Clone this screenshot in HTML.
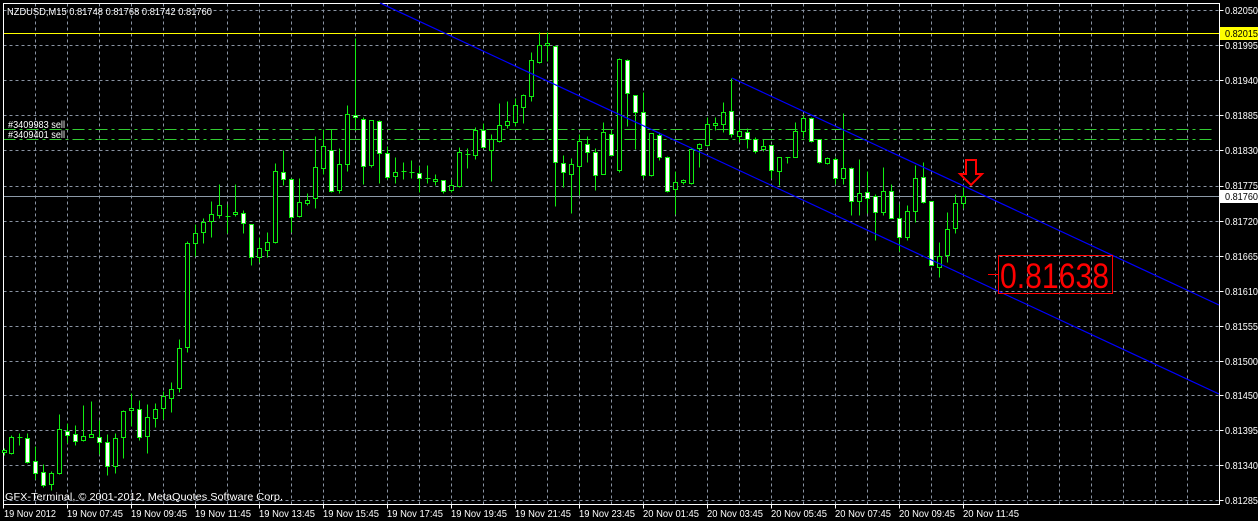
<!DOCTYPE html>
<html><head><meta charset="utf-8"><style>
html,body{margin:0;padding:0;background:#000;}
svg{display:block;}
text{font-family:"Liberation Sans",sans-serif;}
</style></head><body>
<svg width="1258" height="521" viewBox="0 0 1258 521" xmlns="http://www.w3.org/2000/svg">
<rect width="1258" height="521" fill="#000"/>
<g transform="translate(0.5,0.5)" shape-rendering="crispEdges">
<path fill="none" stroke="#8a94a3" stroke-width="1" stroke-dasharray="3,3" d="M35 3V504M67 3V504M99 3V504M131 3V504M163 3V504M195 3V504M227 3V504M259 3V504M291 3V504M323 3V504M355 3V504M387 3V504M419 3V504M451 3V504M483 3V504M515 3V504M547 3V504M579 3V504M611 3V504M643 3V504M675 3V504M707 3V504M739 3V504M771 3V504M803 3V504M835 3V504M867 3V504M899 3V504M931 3V504M963 3V504M995 3V504M1027 3V504M1059 3V504M1091 3V504M1123 3V504M1155 3V504M1187 3V504
M3 10H1219M3 45H1219M3 80H1219M3 115H1219M3 150H1219M3 186H1219M3 221H1219M3 256H1219M3 291H1219M3 326H1219M3 361H1219M3 395H1219M3 430H1219M3 465H1219M3 500H1219"/>
<path fill="none" stroke="#3c3" stroke-dasharray="12,4,3,4" d="M3 129H1215M3 139H1215"/>
<path stroke="#ff0" d="M3 33H1219"/>
<path stroke="#8c9aa8" d="M3 196H1219"/>
<path fill="none" stroke="#fff" d="M3 3H1219V504H3Z"/>
<path stroke="#fff" d="M1219 10H1223M1219 45H1223M1219 80H1223M1219 115H1223M1219 150H1223M1219 186H1223M1219 221H1223M1219 256H1223M1219 291H1223M1219 326H1223M1219 361H1223M1219 395H1223M1219 430H1223M1219 465H1223M1219 500H1223M3 504V508M67 504V508M131 504V508M195 504V508M259 504V508M323 504V508M387 504V508M451 504V508M515 504V508M579 504V508M643 504V508M707 504V508M771 504V508M835 504V508M899 504V508M963 504V508"/>
<path fill="none" stroke="#1e1" d="M4 448V455M11 435V454M19 433V445M27 433V463M35 446V479M43 464V487M51 471V490M59 414V474M67 423V443M75 425V445M83 405V441M91 401V437M99 420V454M107 434V475M115 433V473M123 410V458M131 393V426M139 400V440M147 404V453M155 403V427M163 391V419M171 382V412M179 339V392M187 241V352M195 224V256M203 218V243M211 201V237M219 184V218M227 204V233M235 184V216M243 210V233M251 224V265M259 237V262M267 232V257M275 163V243M283 150V185M291 178V232M299 178V217M307 193V205M315 136V208M323 129V174M331 129V192M339 148V193M347 105V171M355 38V130M363 117V184M371 120V167M379 120V183M387 146V179M395 157V183M403 162V179M411 160V178M419 166V192M427 165V183M435 174V185M443 180V193M451 179V192M459 147V187M467 148V168M475 127V159M483 123V148M491 134V181M499 103V142M507 101V128M515 98V126M523 94V123M531 52V101M539 32V63M547 32V61M555 46V206M563 155V187M571 158V213M579 134V195M587 136V162M595 148V190M603 122V174M611 130V156M619 58V172M627 59V126M635 95V149M643 92V178M651 133V176M659 132V160M667 156V192M675 171V214M683 179V184M691 148V184M699 143V167M707 117V146M715 117V130M723 102V132M731 78V137M739 120V142M747 128V148M755 137V153M763 139V151M771 145V178M779 157V185M787 157V163M795 122V157M803 115V137M811 117V142M819 139V163M827 157V164M835 157V184M843 113V184M851 167V215M859 159V215M867 171V213M875 194V240M883 167V215M891 184V218M899 204V251M907 205V240M915 165V222M923 162V203M931 201V265M939 242V277M947 212V262M955 194V233M963 187V208
M17 437H22M225 216H230M401 171H406M409 172H414M425 178H430M465 154H470M785 157H790"/>
<g fill="#fff" stroke="#1e1">
<rect x="25" y="438" width="4" height="24"/><rect x="33" y="461" width="4" height="12"/><rect x="41" y="472" width="4" height="13"/><rect x="65" y="431" width="4" height="4"/><rect x="73" y="434" width="4" height="7"/><rect x="97" y="437" width="4" height="5"/><rect x="105" y="442" width="4" height="24"/><rect x="137" y="409" width="4" height="28"/><rect x="241" y="213" width="4" height="10"/><rect x="249" y="224" width="4" height="33"/><rect x="281" y="172" width="4" height="7"/><rect x="289" y="179" width="4" height="38"/><rect x="329" y="150" width="4" height="41"/><rect x="353" y="115" width="4" height="2"/><rect x="361" y="119" width="4" height="47"/><rect x="377" y="121" width="4" height="32"/><rect x="385" y="153" width="4" height="24"/><rect x="417" y="173" width="4" height="5"/><rect x="441" y="180" width="4" height="11"/><rect x="481" y="130" width="4" height="17"/><rect x="553" y="46" width="4" height="116"/><rect x="561" y="163" width="4" height="9"/><rect x="585" y="144" width="4" height="8"/><rect x="593" y="152" width="4" height="23"/><rect x="609" y="134" width="4" height="21"/><rect x="625" y="60" width="4" height="33"/><rect x="633" y="95" width="4" height="17"/><rect x="641" y="112" width="4" height="63"/><rect x="657" y="135" width="4" height="22"/><rect x="665" y="157" width="4" height="34"/><rect x="729" y="111" width="4" height="23"/><rect x="745" y="132" width="4" height="7"/><rect x="753" y="139" width="4" height="12"/><rect x="769" y="145" width="4" height="25"/><rect x="809" y="118" width="4" height="23"/><rect x="817" y="139" width="4" height="23"/><rect x="833" y="159" width="4" height="19"/><rect x="849" y="168" width="4" height="33"/><rect x="865" y="192" width="4" height="6"/><rect x="873" y="196" width="4" height="16"/><rect x="889" y="191" width="4" height="27"/><rect x="897" y="218" width="4" height="19"/><rect x="921" y="177" width="4" height="25"/><rect x="929" y="201" width="4" height="64"/>
</g>
<g fill="#000" stroke="#1e1">
<rect x="2" y="450" width="4" height="2"/><rect x="9" y="437" width="4" height="16"/><rect x="49" y="473" width="4" height="11"/><rect x="57" y="429" width="4" height="44"/><rect x="81" y="436" width="4" height="4"/><rect x="89" y="434" width="4" height="3"/><rect x="113" y="438" width="4" height="28"/><rect x="121" y="411" width="4" height="26"/><rect x="129" y="408" width="4" height="2"/><rect x="145" y="417" width="4" height="19"/><rect x="153" y="409" width="4" height="9"/><rect x="161" y="396" width="4" height="12"/><rect x="169" y="389" width="4" height="9"/><rect x="177" y="348" width="4" height="40"/><rect x="185" y="243" width="4" height="104"/><rect x="193" y="233" width="4" height="10"/><rect x="201" y="222" width="4" height="10"/><rect x="209" y="214" width="4" height="7"/><rect x="217" y="205" width="4" height="10"/><rect x="233" y="212" width="4" height="2"/><rect x="257" y="248" width="4" height="9"/><rect x="265" y="242" width="4" height="8"/><rect x="273" y="171" width="4" height="71"/><rect x="297" y="202" width="4" height="14"/><rect x="305" y="200" width="4" height="3"/><rect x="313" y="167" width="4" height="31"/><rect x="321" y="146" width="4" height="22"/><rect x="337" y="164" width="4" height="26"/><rect x="345" y="114" width="4" height="50"/><rect x="369" y="120" width="4" height="45"/><rect x="393" y="172" width="4" height="4"/><rect x="433" y="179" width="4" height="2"/><rect x="449" y="185" width="4" height="5"/><rect x="457" y="152" width="4" height="34"/><rect x="473" y="130" width="4" height="25"/><rect x="489" y="139" width="4" height="11"/><rect x="497" y="125" width="4" height="16"/><rect x="505" y="121" width="4" height="4"/><rect x="513" y="105" width="4" height="17"/><rect x="521" y="95" width="4" height="12"/><rect x="529" y="60" width="4" height="36"/><rect x="537" y="45" width="4" height="17"/><rect x="545" y="43" width="4" height="2"/><rect x="569" y="164" width="4" height="10"/><rect x="577" y="141" width="4" height="25"/><rect x="601" y="132" width="4" height="42"/><rect x="617" y="59" width="4" height="111"/><rect x="649" y="133" width="4" height="42"/><rect x="673" y="182" width="4" height="7"/><rect x="681" y="180" width="4" height="2"/><rect x="689" y="149" width="4" height="34"/><rect x="697" y="144" width="4" height="4"/><rect x="705" y="124" width="4" height="21"/><rect x="713" y="123" width="4" height="2"/><rect x="721" y="112" width="4" height="12"/><rect x="737" y="131" width="4" height="5"/><rect x="761" y="146" width="4" height="3"/><rect x="777" y="157" width="4" height="14"/><rect x="793" y="131" width="4" height="26"/><rect x="801" y="118" width="4" height="13"/><rect x="825" y="158" width="4" height="5"/><rect x="841" y="168" width="4" height="10"/><rect x="857" y="193" width="4" height="8"/><rect x="881" y="191" width="4" height="21"/><rect x="905" y="211" width="4" height="26"/><rect x="913" y="178" width="4" height="33"/><rect x="937" y="256" width="4" height="11"/><rect x="945" y="229" width="4" height="26"/><rect x="953" y="203" width="4" height="25"/><rect x="961" y="196" width="4" height="7"/>
</g>
</g>
<path fill="none" stroke="#0000ff" stroke-width="1.2" d="M380 3L1219 394M732 78L1219 305"/>
<polygon points="966,160 976,160 976,174 982,174 971,185 960,174 966,174" fill="none" stroke="#f00" stroke-width="2"/>
<rect x="998.5" y="255.5" width="114" height="38" fill="none" stroke="#f00"/>
<path d="M988 274.5H999" stroke="#f00"/>
<text x="1000" y="288" font-size="35" fill="#f00" textLength="109" lengthAdjust="spacingAndGlyphs">0.81638</text>
<rect x="1220" y="27" width="38" height="13" fill="#ff0"/>
<rect x="1220" y="190" width="38" height="13" fill="#fff"/>
<g font-size="10.5" fill="#fff" lengthAdjust="spacingAndGlyphs">
<g>
<text x="1225" y="14" textLength="33" lengthAdjust="spacingAndGlyphs">0.82050</text>
<text x="1225" y="37" fill="#000" textLength="33" lengthAdjust="spacingAndGlyphs">0.82015</text>
<text x="1225" y="49" textLength="33" lengthAdjust="spacingAndGlyphs">0.81995</text>
<text x="1225" y="84" textLength="33" lengthAdjust="spacingAndGlyphs">0.81940</text>
<text x="1225" y="119" textLength="33" lengthAdjust="spacingAndGlyphs">0.81885</text>
<text x="1225" y="154" textLength="33" lengthAdjust="spacingAndGlyphs">0.81830</text>
<text x="1225" y="189" textLength="33" lengthAdjust="spacingAndGlyphs">0.81775</text>
<text x="1225" y="200" fill="#000" textLength="33" lengthAdjust="spacingAndGlyphs">0.81760</text>
<text x="1225" y="225" textLength="33" lengthAdjust="spacingAndGlyphs">0.81720</text>
<text x="1225" y="260" textLength="33" lengthAdjust="spacingAndGlyphs">0.81665</text>
<text x="1225" y="295" textLength="33" lengthAdjust="spacingAndGlyphs">0.81610</text>
<text x="1225" y="330" textLength="33" lengthAdjust="spacingAndGlyphs">0.81555</text>
<text x="1225" y="365" textLength="33" lengthAdjust="spacingAndGlyphs">0.81500</text>
<text x="1225" y="399" textLength="33" lengthAdjust="spacingAndGlyphs">0.81450</text>
<text x="1225" y="434" textLength="33" lengthAdjust="spacingAndGlyphs">0.81395</text>
<text x="1225" y="469" textLength="33" lengthAdjust="spacingAndGlyphs">0.81340</text>
<text x="1225" y="504" textLength="33" lengthAdjust="spacingAndGlyphs">0.81285</text>
</g>
<text x="7" y="15" textLength="205" lengthAdjust="spacingAndGlyphs">NZDUSD,M15  0.81748 0.81768 0.81742 0.81760</text>
<text x="8" y="128" textLength="57" lengthAdjust="spacingAndGlyphs">#3409983 sell</text>
<text x="8" y="138" textLength="57" lengthAdjust="spacingAndGlyphs">#3409401 sell</text>
<text x="5" y="500" textLength="278" lengthAdjust="spacingAndGlyphs">GFX-Terminal, © 2001-2012, MetaQuotes Software Corp.</text>
<text x="4" y="517" textLength="52" lengthAdjust="spacingAndGlyphs">19 Nov 2012</text>
<text x="67" y="517" textLength="56" lengthAdjust="spacingAndGlyphs">19 Nov 07:45</text>
<text x="131" y="517" textLength="56" lengthAdjust="spacingAndGlyphs">19 Nov 09:45</text>
<text x="195" y="517" textLength="56" lengthAdjust="spacingAndGlyphs">19 Nov 11:45</text>
<text x="259" y="517" textLength="56" lengthAdjust="spacingAndGlyphs">19 Nov 13:45</text>
<text x="323" y="517" textLength="56" lengthAdjust="spacingAndGlyphs">19 Nov 15:45</text>
<text x="387" y="517" textLength="56" lengthAdjust="spacingAndGlyphs">19 Nov 17:45</text>
<text x="451" y="517" textLength="56" lengthAdjust="spacingAndGlyphs">19 Nov 19:45</text>
<text x="515" y="517" textLength="56" lengthAdjust="spacingAndGlyphs">19 Nov 21:45</text>
<text x="579" y="517" textLength="56" lengthAdjust="spacingAndGlyphs">19 Nov 23:45</text>
<text x="643" y="517" textLength="56" lengthAdjust="spacingAndGlyphs">20 Nov 01:45</text>
<text x="707" y="517" textLength="56" lengthAdjust="spacingAndGlyphs">20 Nov 03:45</text>
<text x="771" y="517" textLength="56" lengthAdjust="spacingAndGlyphs">20 Nov 05:45</text>
<text x="835" y="517" textLength="56" lengthAdjust="spacingAndGlyphs">20 Nov 07:45</text>
<text x="899" y="517" textLength="56" lengthAdjust="spacingAndGlyphs">20 Nov 09:45</text>
<text x="963" y="517" textLength="56" lengthAdjust="spacingAndGlyphs">20 Nov 11:45</text>
</g>
</svg>
</body></html>
